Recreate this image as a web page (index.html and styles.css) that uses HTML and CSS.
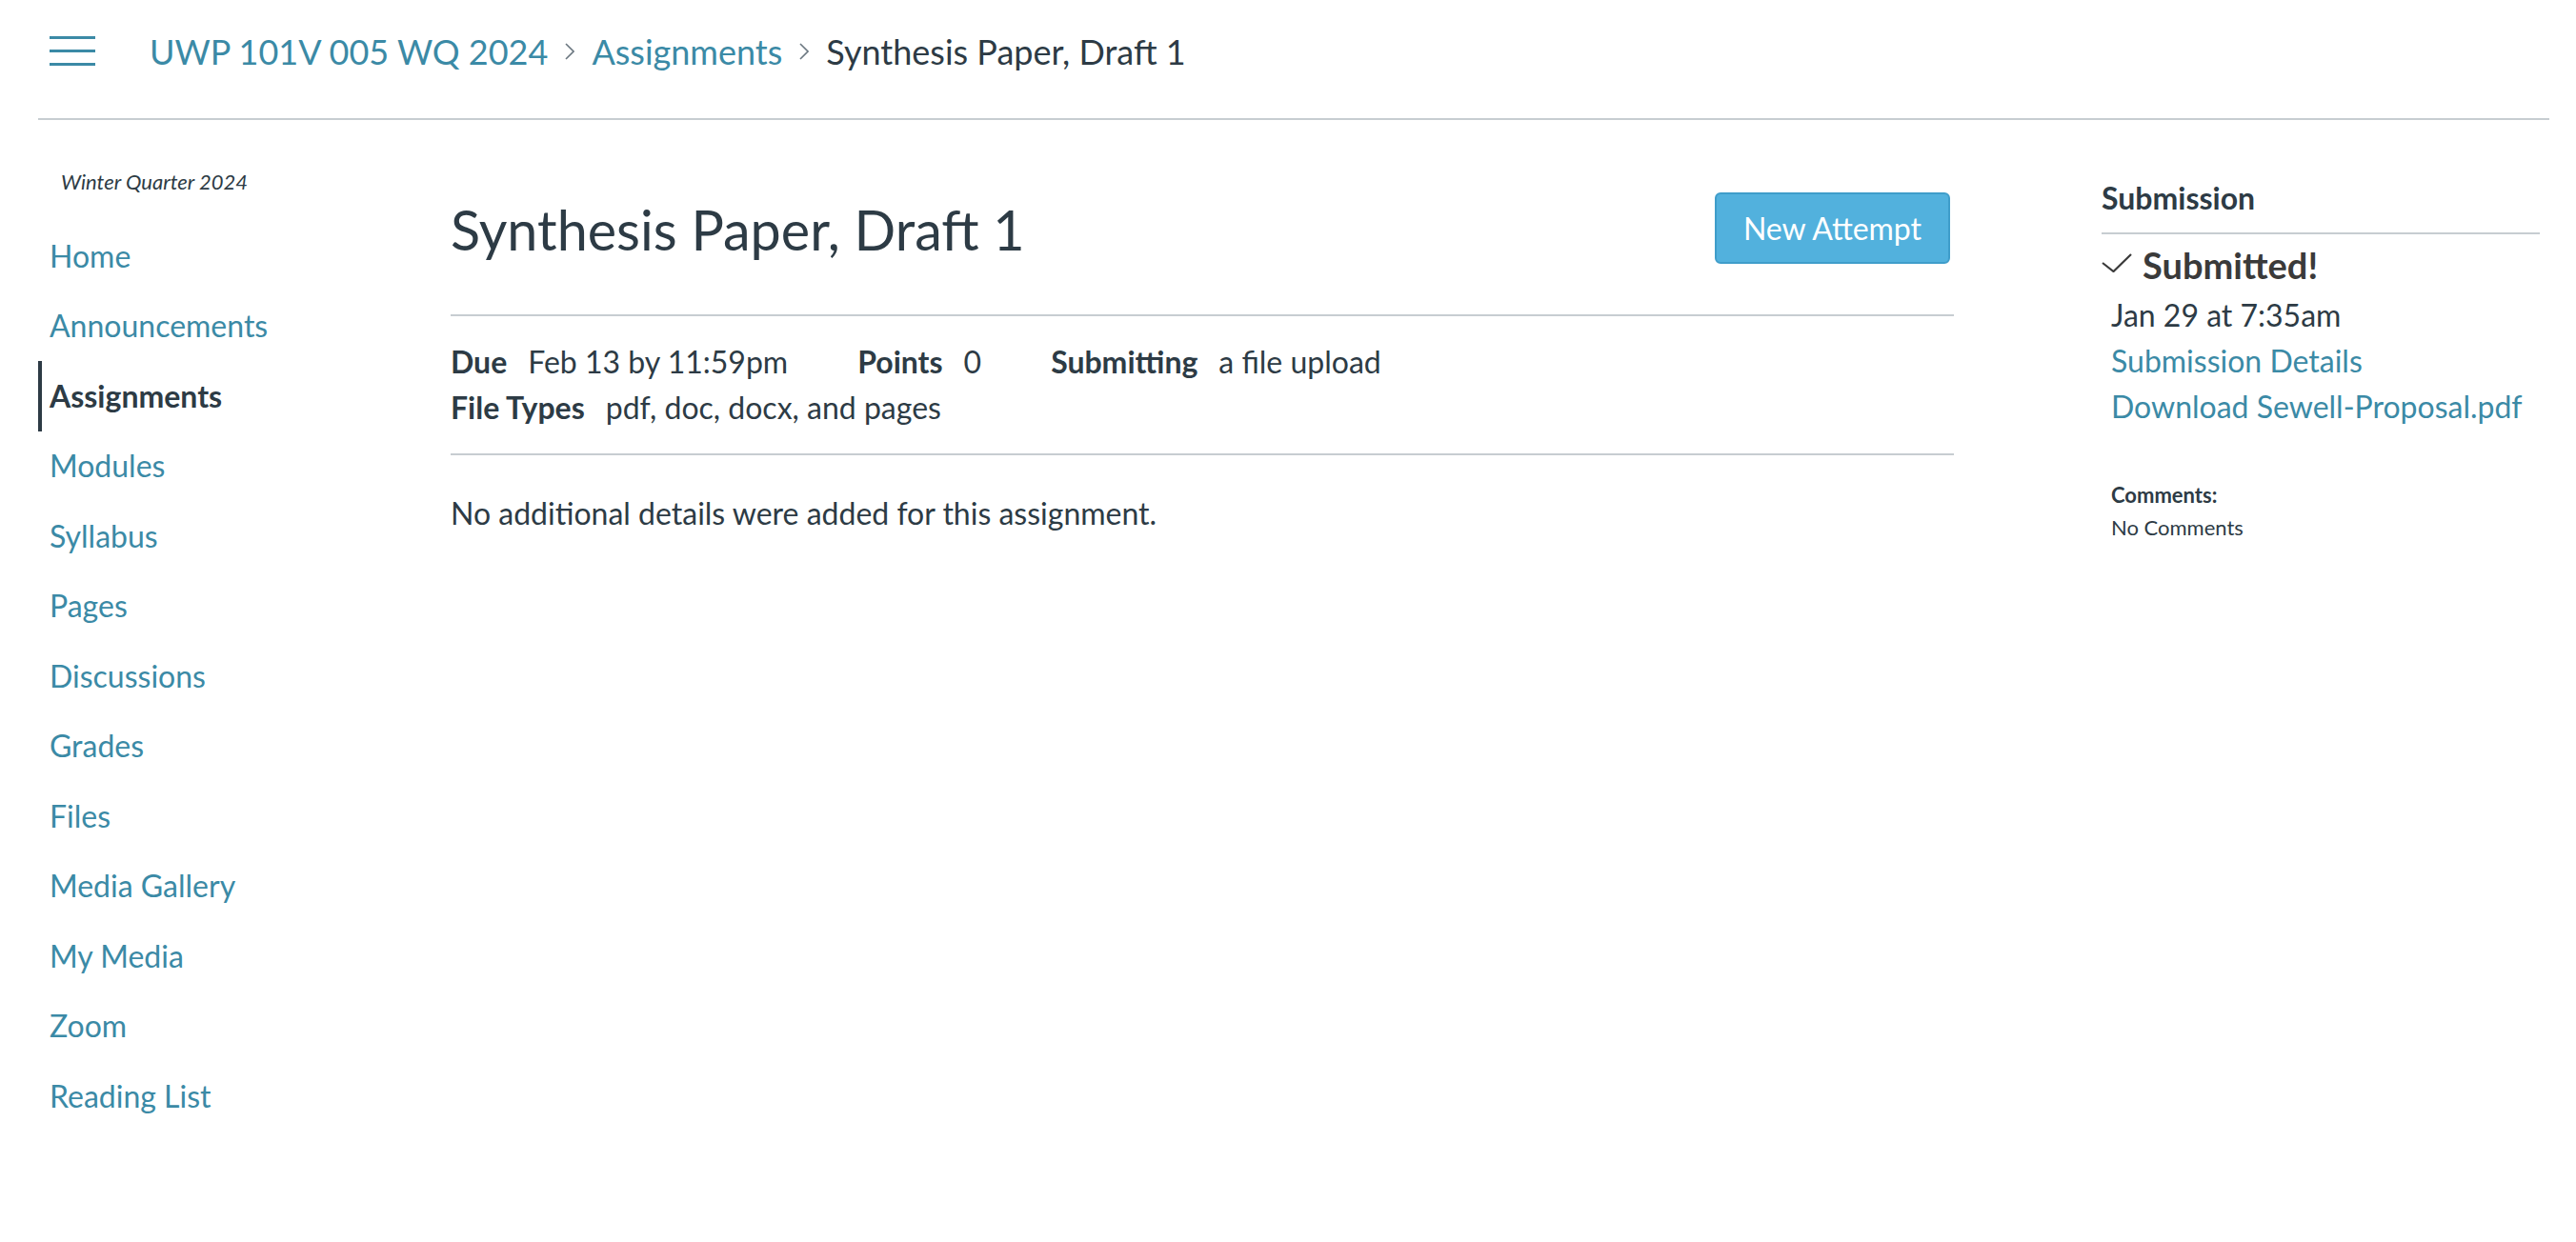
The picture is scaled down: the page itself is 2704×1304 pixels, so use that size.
FILE: index.html
```html
<!DOCTYPE html>
<html lang="en">
<head>
<meta charset="utf-8">
<title>Synthesis Paper, Draft 1</title>
<link rel="stylesheet" href="styles.css">
</head>
<body>
<header class="topbar">
  <button class="hamburger" aria-label="Menu">
    <svg width="48" height="32" viewBox="0 0 48 32"><path d="M0 1.5H48M0 15.5H48M0 29.5H48" stroke="#3b8aa6" stroke-width="3"/></svg>
  </button>
  <nav class="crumbs">
    <a href="#">UWP 101V 005 WQ 2024</a>
    <svg class="chev" width="10" height="18" viewBox="0 0 10 18"><path d="M1 1L9 9L1 17" fill="none" stroke="#6b7780" stroke-width="1.6"/></svg>
    <a href="#">Assignments</a>
    <svg class="chev" width="10" height="18" viewBox="0 0 10 18"><path d="M1 1L9 9L1 17" fill="none" stroke="#6b7780" stroke-width="1.6"/></svg>
    <span class="current">Synthesis Paper, Draft 1</span>
  </nav>
</header>
<div class="layout">
  <aside class="sidebar">
    <div class="term">Winter Quarter 2024</div>
    <ul class="nav">
      <li><a href="#">Home</a></li>
      <li><a href="#">Announcements</a></li>
      <li class="active"><a href="#">Assignments</a></li>
      <li><a href="#">Modules</a></li>
      <li><a href="#">Syllabus</a></li>
      <li><a href="#">Pages</a></li>
      <li><a href="#">Discussions</a></li>
      <li><a href="#">Grades</a></li>
      <li><a href="#">Files</a></li>
      <li><a href="#">Media Gallery</a></li>
      <li><a href="#">My Media</a></li>
      <li><a href="#">Zoom</a></li>
      <li><a href="#">Reading List</a></li>
    </ul>
  </aside>
  <main class="content">
    <div class="title-row">
      <h1 class="title">Synthesis Paper, Draft 1</h1>
      <button class="btn-primary">New Attempt</button>
    </div>
    <div class="details">
      <div class="detail-line">
        <span class="item"><b>Due</b><span class="val">Feb 13 by 11:59pm</span></span>
        <span class="item"><b>Points</b><span class="val">0</span></span>
        <span class="item"><b>Submitting</b><span class="val">a file upload</span></span>
      </div>
      <div class="detail-line">
        <span class="item"><b>File Types</b><span class="val">pdf, doc, docx, and pages</span></span>
      </div>
    </div>
    <p class="description">No additional details were added for this assignment.</p>
  </main>
  <aside class="submission">
    <h2 class="sub-head">Submission</h2>
    <div class="submitted">
      <svg class="check" width="32" height="20" viewBox="0 0 32 20"><path d="M1 10L12.5 19L31 1" fill="none" stroke="#3a3a3a" stroke-width="2.2"/></svg>
      <span>Submitted!</span>
    </div>
    <div class="sub-info">
      <div>Jan 29 at 7:35am</div>
      <div><a href="#">Submission Details</a></div>
      <div><a href="#">Download Sewell-Proposal.pdf</a></div>
    </div>
    <div class="comments">
      <div class="comments-label">Comments:</div>
      <div>No Comments</div>
    </div>
  </aside>
</div>
</body>
</html>
```
FILE: styles.css
```css
* { box-sizing: border-box; }
html, body { margin: 0; padding: 0; background: #fff; }
body {
  font-family: Lato, "Noto Sans", "Liberation Sans", sans-serif;
  color: #2d3b45;
  font-size: 32px;
  line-height: 48px;
}
a { color: #3b8aa6; text-decoration: none; }

.topbar {
  display: flex;
  align-items: center;
  height: 126px;
  margin: 0 28px 0 40px;
  padding: 0 0 16px 12px;
  border-bottom: 2px solid #c7cdd1;
}
.hamburger {
  border: 0;
  background: none;
  padding: 0;
  width: 48px;
  height: 32px;
  display: block;
  margin-right: 57px;
}
.hamburger svg { display: block; }
.crumbs {
  display: flex;
  align-items: center;
  font-size: 36px;
  line-height: 44px;
}
.crumbs .chev { margin: 0 18px; }
.crumbs .current { color: #2d3b45; }

.layout {
  display: flex;
  align-items: flex-start;
  margin-left: 40px;
}

.sidebar { width: 433px; flex: none; padding-top: 50px; }
.term {
  font-style: italic;
  font-size: 22px;
  line-height: 30px;
  padding-left: 24px;
  margin-bottom: 26px;
}
.nav { list-style: none; margin: 0; padding: 0; }
.nav li {
  height: 73.5px;
  display: flex;
  align-items: center;
  padding-left: 8px;
  font-size: 32px;
  border-left: 4px solid transparent;
}
.nav li.active { border-left-color: #2d3b45; }
.nav li.active a { color: #2d3b45; font-weight: 700; }

.content { width: 1578px; flex: none; padding-top: 76px; }
.title-row {
  display: flex;
  align-items: center;
  justify-content: space-between;
  padding-right: 4px;
  margin-bottom: 53px;
}
.title {
  margin: 2px 0 0;
  font-size: 57.5px;
  font-weight: 400;
  line-height: 66px;
}
.btn-primary {
  font-family: inherit;
  font-size: 32px;
  color: #fff;
  background: #52b1dd;
  border: 2px solid #3f9dca;
  border-radius: 6px;
  width: 247px;
  height: 75px;
  padding: 0;
}
.details {
  border-top: 2px solid #c7cdd1;
  border-bottom: 2px solid #c7cdd1;
  padding: 24px 0;
}
.detail-line { display: flex; }
.item { margin-right: 73px; }
.item b { font-weight: 700; }
.val { margin-left: 22px; }
.description { margin: 37px 0 0; }

.submission { width: 460px; flex: none; margin-left: 155px; padding-top: 58px; }
.sub-head {
  margin: 0;
  font-size: 32px;
  font-weight: 700;
  line-height: 48px;
  padding-bottom: 12px;
  border-bottom: 2px solid #c7cdd1;
}
.submitted {
  display: flex;
  align-items: center;
  margin-top: 8px;
  font-size: 38px;
  font-weight: 700;
  line-height: 48px;
  color: #3a3a3a;
}
.submitted .check { margin-right: 11px; margin-top: -4px; }
.sub-info { padding-left: 10px; margin-top: 5px; }
.comments {
  padding-left: 10px;
  margin-top: 52px;
  font-size: 22px;
  line-height: 34px;
}
.comments-label { font-weight: 700; }
```
